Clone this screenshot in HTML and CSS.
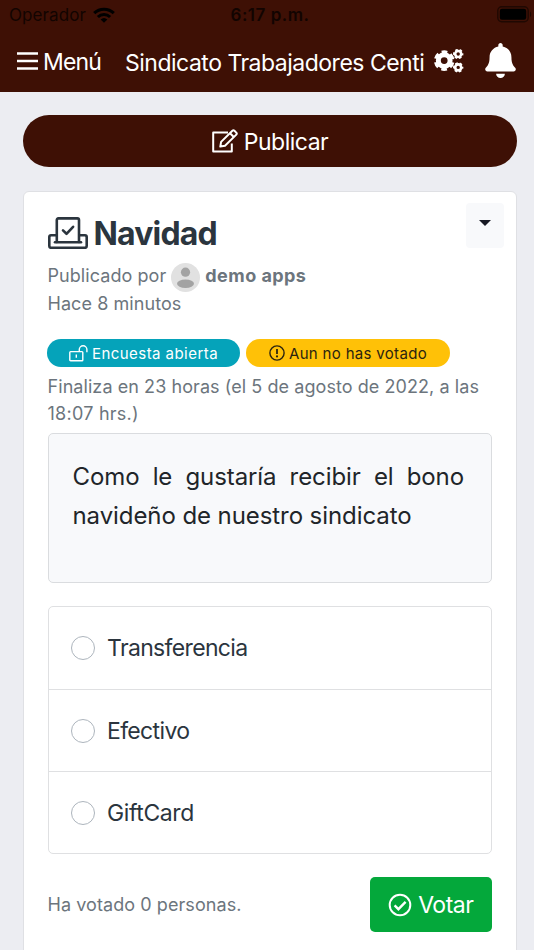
FILE: index.html
```html
<!DOCTYPE html>
<html lang="es">
<head>
  <meta charset="UTF-8">
  <meta name="viewport" content="width=device-width, initial-scale=1.0">
  <title>Sindicato Trabajadores</title>
  <link rel="stylesheet" href="styles.css">
</head>
<body>

  <header class="header">
    <div class="status-bar">
      <div class="carrier">
        <span class="carrier-name">Operador</span>
        <svg class="wifi" viewBox="0 0 22 16">
          <g fill="none" stroke="#000" stroke-width="3.1">
            <path d="M1.2 6.2a14 14 0 0 1 19.6 0"/>
            <path d="M4.9 10a8.8 8.8 0 0 1 12.2 0"/>
          </g>
          <path d="M7.6 12.5a5 5 0 0 1 6.8 0L11 15.8z"/>
        </svg>
      </div>
      <span class="clock">6:17 p.m.</span>
      <svg class="battery" viewBox="0 0 36 17">
        <rect x="0.8" y="0.8" width="30.4" height="15" rx="4" fill="none" stroke="#1f0802" stroke-width="1.4"/>
        <rect x="2.8" y="2.8" width="26.4" height="11" rx="2.2"/>
        <path d="M33 5.5v5.6c1.6-.6 1.6-5 0-5.6z" fill="#1f0802"/>
      </svg>
    </div>
    <nav class="navbar">
      <a class="menu">
        <svg class="menu-icon" viewBox="0 0 21 18">
          <path d="M0 1.5h21M0 9h21M0 16.5h21" stroke="#fff" stroke-width="2.4"/>
        </svg>
        <span class="menu-text">Menú</span>
      </a>
      <span class="brand">Sindicato Trabajadores Centi</span>
      <svg class="gears" viewBox="0 0 30 24">
        <g fill="none" stroke="#fff">
          <circle cx="10.2" cy="11.6" r="5.9" stroke-width="5"/>
          <circle cx="10.2" cy="11.6" r="8.8" stroke-width="3" stroke-dasharray="5.6 3.615" stroke-dashoffset="-1.81"/>
          <circle cx="24.2" cy="5" r="3" stroke-width="2.6"/>
          <circle cx="24.2" cy="5" r="4.4" stroke-width="1.6" stroke-dasharray="2.6 2.008" stroke-dashoffset="1.3"/>
          <circle cx="24.2" cy="18.4" r="3" stroke-width="2.6"/>
          <circle cx="24.2" cy="18.4" r="4.4" stroke-width="1.6" stroke-dasharray="2.6 2.008" stroke-dashoffset="1.3"/>
        </g>
      </svg>
      <svg class="bell" viewBox="0 0 448 512">
        <path fill="#fff" d="M224 512c35.32 0 63.97-28.65 63.97-64H160.03c0 35.35 28.65 64 63.97 64zm215.39-149.71c-19.32-20.76-55.47-51.99-55.47-154.29 0-77.7-54.48-139.9-127.94-155.16V32c0-17.67-14.32-32-31.98-32s-31.98 14.33-31.98 32v20.84C118.56 68.1 64.08 130.3 64.08 208c0 102.3-36.15 133.53-55.47 154.29-6 6.45-8.66 14.16-8.61 21.71.11 16.4 12.98 32 32.1 32h383.8c19.12 0 32-15.6 32.1-32 .05-7.55-2.61-15.27-8.61-21.71z"/>
      </svg>
    </nav>
  </header>

  <main class="content">
    <button class="btn-publish">
      <svg class="edit-icon" viewBox="0 0 26 24">
        <g fill="none" stroke="#fff" stroke-width="2" stroke-linejoin="round">
          <path d="M16 3.6H1.2v19h18.6v-8"/>
          <path d="M8.3 17.6l.8-4.7L20.4 1.7q1-1 2 0l1.9 1.9q1 1 0 2L13 16.8z"/>
          <path d="M18 4.2l3.8 3.8"/>
        </g>
      </svg>
      <span class="publish-text">Publicar</span>
    </button>

    <article class="card">
      <div class="card-head">
        <svg class="ballot-icon" viewBox="0 0 40 32">
          <g fill="none" stroke="#2b353e" stroke-width="2.6" stroke-linejoin="round" stroke-linecap="round">
            <path d="M8.8 25V3q0-1.6 1.6-1.6h19q1.6 0 1.6 1.6v22"/>
            <path d="M8 18.2H3q-1.7 0-1.7 1.7v9.2q0 1.7 1.7 1.7h34q1.7 0 1.7-1.7v-9.2q0-1.7-1.7-1.7h-5"/>
            <path d="M7 25.2h26"/>
            <path d="M15 13.4l3.5 3.4 6.6-7"/>
          </g>
        </svg>
        <h1 class="title">Navidad</h1>
        <button class="dropdown"><span class="caret"></span></button>
      </div>

      <div class="meta">
        <span class="by">Publicado por</span>
        <svg class="avatar" viewBox="0 0 29 29">
          <circle cx="14.5" cy="14.5" r="14.5" fill="#e1e1e1"/>
          <circle cx="14.5" cy="9.2" r="4.6" fill="#a3a3a3"/>
          <ellipse cx="14.5" cy="20.7" rx="8.5" ry="4.2" fill="#a3a3a3"/>
        </svg>
        <strong class="author">demo apps</strong>
      </div>
      <div class="ago">Hace 8 minutos</div>

      <div class="badges">
        <span class="badge badge-info">
          <svg class="lock-icon" viewBox="0 0 19 17">
            <g fill="none" stroke="#fff" stroke-width="1.4" stroke-linejoin="round">
              <rect x="0.8" y="6.6" width="13" height="9.2" rx="0.8"/>
              <path d="M10.3 6.4V4.6a3.8 3.8 0 0 1 7.6 0v2.6"/>
              <path d="M7.3 9.6v3.2"/>
            </g>
          </svg>
          <span class="info-text">Encuesta abierta</span>
        </span>
        <span class="badge badge-warning">
          <svg class="alert-icon" viewBox="0 0 16 16">
            <circle cx="8" cy="8" r="7.1" fill="none" stroke="#2b2410" stroke-width="1.4"/>
            <path d="M8 3.9v5" stroke="#2b2410" stroke-width="1.8"/>
            <circle cx="8" cy="11.4" r="1.1" fill="#2b2410"/>
          </svg>
          <span class="warning-text">Aun no has votado</span>
        </span>
      </div>

      <div class="deadline">Finaliza en 23 horas (el 5 de agosto de 2022, a las<br><span class="hour">18:07 hrs.)</span></div>

      <div class="question">Como le gustaría recibir el bono navideño de nuestro sindicato</div>

      <div class="options">
        <label class="option"><span class="radio"></span><span>Transferencia</span></label>
        <label class="option"><span class="radio"></span><span>Efectivo</span></label>
        <label class="option"><span class="radio"></span><span class="giftcard">GiftCard</span></label>
      </div>

      <div class="card-foot">
        <span class="votes">Ha votado 0 personas.</span>
        <button class="btn-vote">
          <svg class="check-icon" viewBox="0 0 24 24">
            <g fill="none" stroke="#fff" stroke-width="2">
              <circle cx="12" cy="12" r="10.3"/>
              <path d="M6.6 12.4l3.8 3.8 7.2-7.3" stroke-width="2.4"/>
            </g>
          </svg>
          <span class="vote-text">Votar</span>
        </button>
      </div>
    </article>
  </main>

</body>
</html>
```
FILE: styles.css
```css
* {
  box-sizing: border-box;
}
body {
  margin: 0;
  height: 950px;
  overflow: hidden;
  background-color: #ecedf2;
  color: #212529;
  font-family: Inter, 'Liberation Sans', sans-serif;
}
svg {
  display: block;
  flex: none;
}
span, h1, strong {
  white-space: nowrap;
}
button {
  border: none;
  padding: 0;
  font-family: inherit;
}
.header {
  height: 92px;
  background-color: #3e1005;
}
.status-bar {
  height: 30px;
  display: grid;
  grid-template-columns: 1fr auto 1fr;
  align-items: center;
  padding-left: 9px;
  color: #120401;
}
.carrier {
  display: flex;
  align-items: center;
  gap: 7px;
}
.carrier-name { font-size: 17px; letter-spacing: 0.1px; }
.wifi { width: 22px; height: 16px; }
.clock { margin-right: 3px; font-size: 17px; font-weight: 600; letter-spacing: 0.5px; }
.battery { width: 36px; height: 17px; margin: -1px 1px 0 0; justify-self: end; }
.navbar {
  height: 62px;
  display: flex;
  align-items: center;
  padding-left: 17px;
  color: #fff;
}
.menu {
  display: flex;
  align-items: center;
  gap: 5px;
  width: 108px;
}
.menu-icon { width: 21px; height: 18px; }
.menu-text { padding-top: 1px; font-size: 23px; letter-spacing: -0.8px; }
.brand {
  width: 309px;
  padding-top: 4px;
  font-size: 23px;
  letter-spacing: -0.5px;
}
.gears { width: 30px; height: 24px; }
.bell { width: 31px; height: 35px; margin: -1px 0 0 21px; }
.content {
  padding: 23px 17px 0 23px;
}
.btn-publish {
  display: flex;
  align-items: center;
  justify-content: center;
  gap: 6px;
  width: 100%;
  height: 52px;
  border-radius: 26px;
  background-color: #3e1005;
  color: #fff;
}
.edit-icon { width: 26px; height: 24px; }
.publish-text { padding-top: 1px; font-size: 23px; letter-spacing: -0.5px; }
.card {
  height: 800px;
  margin-top: 24px;
  padding: 0 24px 0 23.5px;
  border: 1px solid #dfe0e4;
  border-radius: 6px;
  background-color: #fff;
}
.card-head {
  height: 69px;
  display: flex;
  padding-top: 25px;
}
.ballot-icon { width: 40px; height: 32px; }
.title {
  margin: -3px 0 0 6px;
  font-size: 32px;
  line-height: 40px;
  letter-spacing: -0.85px;
  color: #2b353e;
}
.dropdown {
  width: 38px;
  height: 45px;
  margin: -14px -12px 0 auto;
  padding-left: 13px;
  border-radius: 4px;
  background-color: #f8f9fb;
}
.caret {
  display: block;
  margin-top: -5px;
  width: 0;
  border: 6px solid transparent;
  border-top-color: #171923;
  border-bottom: none;
}
.meta, .ago, .deadline, .votes {
  font-size: 18px;
  letter-spacing: 0.07px;
  color: #6c757d;
}
.meta {
  display: flex;
  align-items: center;
  height: 29px;
}
.avatar { width: 29px; height: 29px; margin: 3px 5px 0; }
.author { font-weight: 700; letter-spacing: 0.45px; }
.ago { line-height: 27px; }
.badges {
  display: flex;
  gap: 6px;
  margin: 22px 0 0 -0.5px;
}
.badge {
  display: flex;
  align-items: center;
  justify-content: center;
  gap: 4px;
  height: 28px;
  border-radius: 14px;
  font-size: 15px;
}
.badge-info { width: 193px; background-color: #05a3ba; color: #fff; }
.badge-warning { width: 204px; background-color: #ffc107; color: #2b2410; }
.info-text { letter-spacing: 0.45px; }
.warning-text { letter-spacing: 0.32px; }
.lock-icon { width: 19px; height: 17px; }
.alert-icon { width: 16px; height: 16px; }
.deadline {
  margin-top: 6px;
  line-height: 27px;
}
.hour { letter-spacing: 0.25px; }
.question {
  height: 150px;
  margin-top: 6px;
  padding: 23px 27px 0 24px;
  border: 1px solid #dadcdf;
  border-radius: 5px;
  background-color: #f8f9fb;
  font-size: 24px;
  line-height: 39px;
  letter-spacing: -0.08px;
  text-align: justify;
}
.options {
  margin-top: 23px;
  border: 1px solid #dfe0e2;
  border-radius: 5px;
}
.option {
  display: flex;
  align-items: center;
  gap: 12px;
  height: 82px;
  padding-left: 22.5px;
  font-size: 23px;
  letter-spacing: -0.65px;
  color: #2b353e;
}
.option + .option {
  border-top: 1px solid #dfe0e2;
}
.giftcard { letter-spacing: -0.4px; }
.radio {
  width: 24px;
  height: 24px;
  border: 1.5px solid #adb5bd;
  border-radius: 50%;
}
.card-foot {
  display: flex;
  align-items: center;
  justify-content: space-between;
  margin-top: 23px;
}
.btn-vote {
  display: flex;
  align-items: center;
  justify-content: center;
  gap: 6px;
  width: 122.5px;
  height: 55px;
  border-radius: 5px;
  background-color: #04a83b;
  color: #fff;
}
.check-icon { width: 24px; height: 24px; }
.vote-text { font-size: 23px; letter-spacing: -0.5px; }
```
